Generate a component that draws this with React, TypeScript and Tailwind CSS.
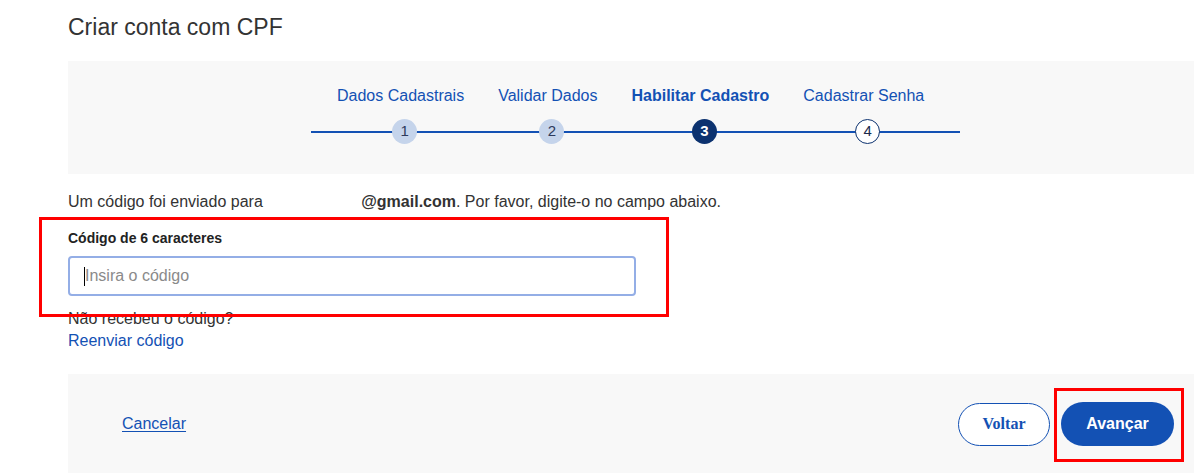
import React from "react"

const steps = [
  { n: 1, label: "Dados Cadastrais", state: "done" },
  { n: 2, label: "Validar Dados", state: "done" },
  { n: 3, label: "Habilitar Cadastro", state: "active" },
  { n: 4, label: "Cadastrar Senha", state: "todo" },
]

function StepCircle({ n, state }: { n: number; state: string }) {
  if (state === "active") {
    return (
      <div className="w-[25px] h-[25px] rounded-full bg-[#0c326f] text-white font-bold text-[15px] flex items-center justify-center">
        {n}
      </div>
    )
  }
  if (state === "done") {
    return (
      <div className="w-[25px] h-[25px] rounded-full bg-[#c5d4eb] text-[#2d3a5c] text-[15px] flex items-center justify-center">
        {n}
      </div>
    )
  }
  return (
    <div className="w-[25px] h-[25px] rounded-full bg-white border border-[#0c326f] text-[#1b2a4d] text-[15px] flex items-center justify-center">
      {n}
    </div>
  )
}

export default function App() {
  return (
    <div className="w-[1194px] h-[473px] bg-white overflow-hidden font-['Liberation_Sans',Arial,sans-serif] text-[#333]">
      <div className="pl-[68px]">
        {/* Title */}
        <h1 className="text-[23px] leading-[28px] pt-[13px] pb-[20px] text-[#333]">Criar conta com CPF</h1>

        {/* Stepper */}
        <div className="bg-[#f8f8f8] h-[113px] pt-[23px]">
          <div className="relative ml-[243px] w-[649px] pl-[9px]">
            <div className="absolute left-0 right-0 top-[47px] h-[2px] bg-[#1351b4]" />
            <div className="relative flex">
              {steps.map((s) => (
                <div key={s.n} className="flex flex-col items-center px-[17px]">
                  <span
                    className={`text-[16px] leading-[24px] whitespace-nowrap text-[#1351b4] ${
                      s.state === "active" ? "font-bold text-[#1351b4]" : ""
                    }`}
                  >
                    {s.label}
                  </span>
                  <div className="mt-[11px] ml-[8px]">
                    <StepCircle n={s.n} state={s.state} />
                  </div>
                </div>
              ))}
            </div>
          </div>
        </div>

        {/* Content */}
        <div className="relative pt-[18px]">
          <p className="text-[16px] leading-[20px]">
            Um código foi enviado para <span className="inline-block w-[94px]" />
            <b className="font-bold">@gmail.com</b>. Por favor, digite-o no campo abaixo.
          </p>
          <label className="block mt-[17px] text-[14px] leading-[18px] font-bold text-[#222]">Código de 6 caracteres</label>
          <div className="relative mt-[9px] w-[568px]">
            <input
              className="w-full h-[40px] rounded-[4px] border-2 border-[#94aee6] bg-white pl-[15px] text-[16px] outline-none placeholder:text-[#8a8a8a]"
              placeholder="Insira o código"
            />
            <span className="absolute left-[16px] top-[11px] w-[1px] h-[19px] bg-black" />
          </div>
          <p className="mt-[12px] text-[16px] leading-[22px]">Não recebeu o código?</p>
          <a className="block text-[16px] leading-[22px] text-[#1351b4]">Reenviar código</a>

          {/* annotation */}
          <div className="absolute left-[-29px] top-[43px] w-[630px] h-[100px] border-[3px] border-[#ff0000]" />
        </div>

        {/* Footer */}
        <div className="relative mt-[22px] h-[100px] bg-[#f8f8f8] flex items-center pl-[54px] pr-[20px]">
          <a className="text-[16px] text-[#1351b4] underline underline-offset-2">Cancelar</a>
          <div className="ml-auto flex items-center gap-[11px]">
            <button className="w-[92px] h-[43px] rounded-full border border-[#1351b4] bg-white text-[#1351b4] font-bold text-[16px] font-['Liberation_Serif',serif]">
              Voltar
            </button>
            <button className="w-[113px] h-[44px] rounded-full bg-[#1351b4] text-white font-bold text-[16px]">
              Avançar
            </button>
          </div>
          <div className="absolute left-[986px] top-[14px] w-[130px] h-[74px] border-[3px] border-[#ff0000]" />
        </div>
      </div>
    </div>
  )
}
